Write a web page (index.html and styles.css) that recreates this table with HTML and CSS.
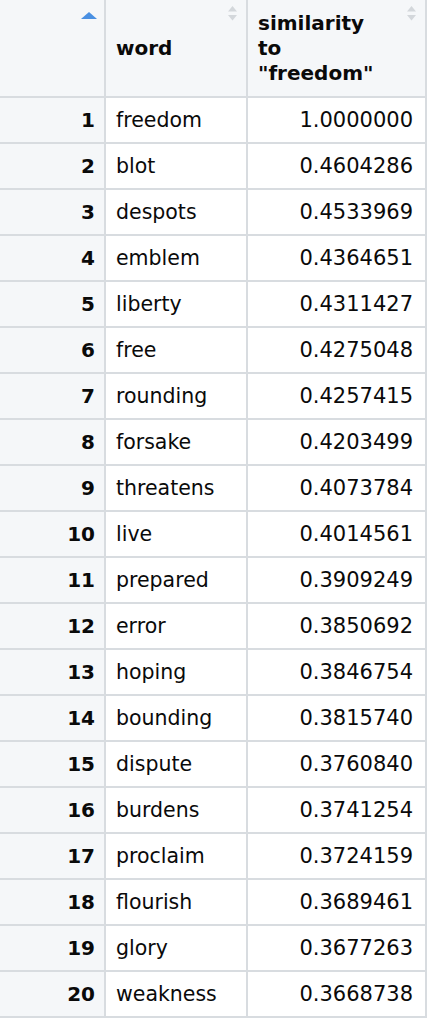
FILE: index.html
```html
<!DOCTYPE html>
<html>
<head>
<meta charset="utf-8">
<link rel="stylesheet" href="styles.css">
</head>
<body>
<table class="grid">
  <thead>
    <tr>
      <th class="rn-head">
        <svg class="sort-asc" width="16" height="7" viewBox="0 0 16 7"><polygon points="8,0 16,7 0,7" fill="#4a90e2"/></svg>
      </th>
      <th class="txt-head">word
        <svg class="sort" width="9" height="15" viewBox="0 0 9 15"><polygon points="4.5,0 9,5.5 0,5.5" fill="#d3d7db"/><polygon points="0,9 9,9 4.5,14.5" fill="#d3d7db"/></svg>
      </th>
      <th class="txt-head">similarity<br>to<br>"freedom"
        <svg class="sort" width="9" height="15" viewBox="0 0 9 15"><polygon points="4.5,0 9,5.5 0,5.5" fill="#d3d7db"/><polygon points="0,9 9,9 4.5,14.5" fill="#d3d7db"/></svg>
      </th>
    </tr>
  </thead>
  <tbody>
    <tr><td class="rn">1</td><td class="w">freedom</td><td class="num">1.0000000</td></tr>
    <tr><td class="rn">2</td><td class="w">blot</td><td class="num">0.4604286</td></tr>
    <tr><td class="rn">3</td><td class="w">despots</td><td class="num">0.4533969</td></tr>
    <tr><td class="rn">4</td><td class="w">emblem</td><td class="num">0.4364651</td></tr>
    <tr><td class="rn">5</td><td class="w">liberty</td><td class="num">0.4311427</td></tr>
    <tr><td class="rn">6</td><td class="w">free</td><td class="num">0.4275048</td></tr>
    <tr><td class="rn">7</td><td class="w">rounding</td><td class="num">0.4257415</td></tr>
    <tr><td class="rn">8</td><td class="w">forsake</td><td class="num">0.4203499</td></tr>
    <tr><td class="rn">9</td><td class="w">threatens</td><td class="num">0.4073784</td></tr>
    <tr><td class="rn">10</td><td class="w">live</td><td class="num">0.4014561</td></tr>
    <tr><td class="rn">11</td><td class="w">prepared</td><td class="num">0.3909249</td></tr>
    <tr><td class="rn">12</td><td class="w">error</td><td class="num">0.3850692</td></tr>
    <tr><td class="rn">13</td><td class="w">hoping</td><td class="num">0.3846754</td></tr>
    <tr><td class="rn">14</td><td class="w">bounding</td><td class="num">0.3815740</td></tr>
    <tr><td class="rn">15</td><td class="w">dispute</td><td class="num">0.3760840</td></tr>
    <tr><td class="rn">16</td><td class="w">burdens</td><td class="num">0.3741254</td></tr>
    <tr><td class="rn">17</td><td class="w">proclaim</td><td class="num">0.3724159</td></tr>
    <tr><td class="rn">18</td><td class="w">flourish</td><td class="num">0.3689461</td></tr>
    <tr><td class="rn">19</td><td class="w">glory</td><td class="num">0.3677263</td></tr>
    <tr><td class="rn">20</td><td class="w">weakness</td><td class="num">0.3668738</td></tr>
  </tbody>
</table>
</body>
</html>
```
FILE: styles.css
```css
html, body {
  margin: 0;
  padding: 0;
  background: #ffffff;
}
body {
  font-family: "DejaVu Sans", "Liberation Sans", sans-serif;
  font-size: 20px;
  color: #0a0a0a;
}
.grid {
  border-collapse: separate;
  border-spacing: 0;
  table-layout: fixed;
  width: 427px;
}
.grid th, .grid td {
  border-right: 2px solid #d8dce0;
  border-bottom: 2px solid #d8dce0;
  padding: 0;
  box-sizing: border-box;
}
.grid th {
  position: relative;
  height: 98px;
  background: #f5f7f9;
  font-weight: bold;
  text-align: left;
  vertical-align: middle;
  line-height: 25px;
  padding: 0 10px;
}
.rn-head { width: 106px; }
.grid thead th:nth-child(2) { width: 142px; }
.grid thead th:nth-child(3) { width: 179px; }
.sort-asc {
  position: absolute;
  top: 12px;
  right: 7px;
}
.sort {
  position: absolute;
  top: 6px;
  right: 9px;
}
.grid td {
  height: 46px;
  vertical-align: middle;
  line-height: 24px;
}
.rn {
  background: #f5f7f9;
  font-weight: bold;
  text-align: right;
  padding-right: 9px !important;
}
.w {
  padding-left: 10px !important;
  font-size: 20.5px;
}
.num {
  text-align: right;
  font-size: 21px;
  padding-right: 12px !important;
}
```
